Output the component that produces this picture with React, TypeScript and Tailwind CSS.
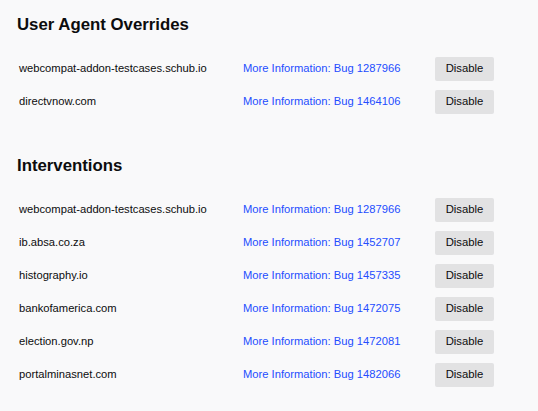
const overrides = [
  { domain: 'webcompat-addon-testcases.schub.io', bug: '1287966' },
  { domain: 'directvnow.com', bug: '1464106' },
]

const interventions = [
  { domain: 'webcompat-addon-testcases.schub.io', bug: '1287966' },
  { domain: 'ib.absa.co.za', bug: '1452707' },
  { domain: 'histography.io', bug: '1457335' },
  { domain: 'bankofamerica.com', bug: '1472075' },
  { domain: 'election.gov.np', bug: '1472081' },
  { domain: 'portalminasnet.com', bug: '1482066' },
]

interface Entry {
  domain: string
  bug: string
}

function Row({ entry }: { entry: Entry }) {
  return (
    <div className="flex h-[33px] items-center pl-[19px]">
      <span className="w-[224px] text-[11.2px] text-[#0c0c0d]">{entry.domain}</span>
      <a className="w-[192px] text-[11.2px] text-[#244dff]" href="#">
        More Information: Bug {entry.bug}
      </a>
      <button className="h-6 w-[59px] rounded-[2px] bg-[#e2e2e3] text-[11.3px] text-[#0c0c0d]">
        Disable
      </button>
    </div>
  )
}

function Section({ title, entries }: { title: string; entries: Entry[] }) {
  return (
    <section>
      <h2 className="pl-[17px] text-[16.8px] leading-6 font-bold text-[#0c0c0d]">{title}</h2>
      <div className="mt-[15px] flex flex-col">
        {entries.map((e) => (
          <Row key={e.domain + e.bug} entry={e} />
        ))}
      </div>
    </section>
  )
}

export default function App() {
  return (
    <div
      className="flex h-[411px] flex-col gap-[36px] bg-[#f9f9fa] pt-[13px]"
      style={{ fontFamily: '"Liberation Sans", Arial, sans-serif' }}
    >
      <Section title="User Agent Overrides" entries={overrides} />
      <Section title="Interventions" entries={interventions} />
    </div>
  )
}
